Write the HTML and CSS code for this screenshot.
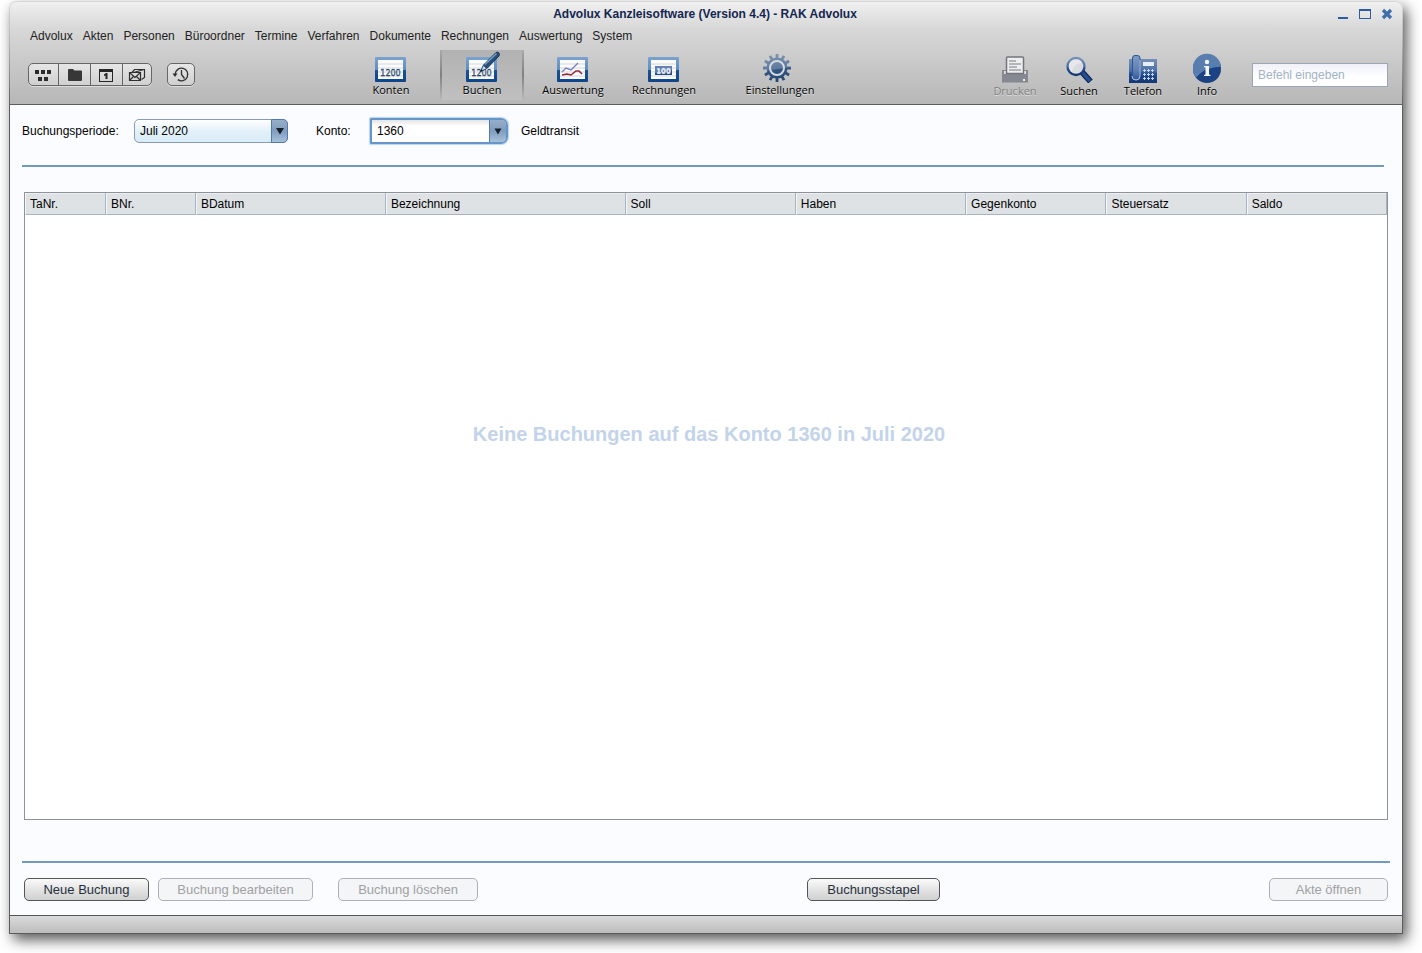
FILE: index.html
```html
<!DOCTYPE html>
<html lang="de">
<head>
<meta charset="utf-8">
<title>Advolux Kanzleisoftware</title>
<link rel="stylesheet" href="styles.css">
</head>
<body>
<svg class="defs" width="0" height="0" aria-hidden="true">
  <defs>
    <linearGradient id="frame" x1="0" y1="0" x2="0" y2="1">
      <stop offset="0" stop-color="#7ba3cf"/><stop offset=".5" stop-color="#5c8dc3"/><stop offset=".51" stop-color="#1c5394"/><stop offset="1" stop-color="#0d4588"/>
    </linearGradient>
    <linearGradient id="gloss" x1="0" y1="0" x2="0" y2="1">
      <stop offset="0" stop-color="#7590b8"/><stop offset=".5" stop-color="#4a6fa8"/><stop offset=".62" stop-color="#224c8e"/><stop offset="1" stop-color="#123672"/>
    </linearGradient>
    <linearGradient id="steel" gradientUnits="userSpaceOnUse" x1="-2" y1="-14" x2="2" y2="14">
      <stop offset="0" stop-color="#7f93ad"/><stop offset=".52" stop-color="#5f7a9e"/><stop offset=".56" stop-color="#34557f"/><stop offset="1" stop-color="#24466f"/>
    </linearGradient>
    <linearGradient id="handset" x1="0" y1="0" x2="0" y2="1">
      <stop offset="0" stop-color="#7f9ac4"/><stop offset=".6" stop-color="#5f80b4"/><stop offset="1" stop-color="#2f5699"/>
    </linearGradient>
    <g id="card">
      <rect x="0" y="6" width="31" height="25" rx="1" fill="url(#frame)"/>
      <rect x="3" y="9" width="25" height="19" fill="#fcfcfd"/>
      <path d="M3 12h25v2H3zM3 16h25v2H3zM3 20h25v2H3zM3 24h25v2H3z" fill="#e6e9ee"/>
    </g>
  </defs>
</svg>

<div class="window">
  <header class="header">
    <div class="titlebar">
      <h1 class="title">Advolux Kanzleisoftware (Version 4.4) - RAK Advolux</h1>
      <div class="controls">
        <button type="button" aria-label="Minimieren"><svg width="12" height="12"><path d="M1 9h10v2H1z" fill="#2c5da3"/></svg></button>
        <button type="button" aria-label="Maximieren"><svg width="12" height="12"><path d="M0 1h12v10H0zM1 3v7h10V3z" fill="#2c5da3" fill-rule="evenodd"/></svg></button>
        <button type="button" aria-label="Schließen"><svg width="12" height="12"><path d="M2 2l8 8M10 2l-8 8" stroke="#3f6eae" stroke-width="3.200"/></svg></button>
      </div>
    </div>

    <nav class="menu" aria-label="Hauptmenü">
      <a href="#">Advolux</a><a href="#">Akten</a><a href="#">Personen</a><a href="#">Büroordner</a><a href="#">Termine</a><a href="#">Verfahren</a><a href="#">Dokumente</a><a href="#">Rechnungen</a><a href="#">Auswertung</a><a href="#">System</a>
    </nav>

    <div class="toolbar">
      <div class="quick">
        <div class="segments">
          <button type="button" aria-label="Übersicht"><svg width="18" height="14"><path d="M0 2h4v4H0zM6 2h4v4H6zM12 2h4v4h-4zM3 9h4v4H3zM9 9h4v4H9z" fill="#2b2b2b"/></svg></button>
          <button type="button" aria-label="Akten"><svg width="16" height="14"><path d="M1 2q0-1 1-1h4l1.500 1.500H14q1 0 1 1V12q0 1-1 1H2q-1 0-1-1z" fill="#373737"/></svg></button>
          <button type="button" aria-label="Kalender"><svg width="16" height="14"><path d="M0 1h14v13H0zM1 4v9h12V4z" fill="#262626" fill-rule="evenodd"/><path d="M5 6.500L7 5h1.500v6H6.500V7.500L5 8z" fill="#262626"/></svg></button>
          <button type="button" aria-label="Nachrichten"><svg width="18" height="14" fill="none" stroke="#303030" stroke-width="1.200"><path d="M4 4.500L6.500 1.500h10v8l-3 2"/><path d="M5.500 4.500L16 1.500"/><path d="M1.500 4.500h11v8h-11zM1.500 4.500l5.500 5 5.500-5M1.500 12.500l4-4M12.500 12.500l-4-4"/></svg></button>
        </div>
        <button class="history" type="button" aria-label="Verlauf"><svg width="18" height="18" fill="none" stroke="#303030" stroke-width="1.300"><path d="M3.200 8a6.300 6.300 0 1 1 2.600 5.600"/><path d="M9.500 4v4.500l3 4"/><path d="M.5 7.500h5L3 11z" fill="#303030" stroke="none"/></svg></button>
      </div>

      <nav class="modules" aria-label="Buchhaltung">
        <button class="tool" type="button">
          <svg width="36" height="32" viewBox="-2 -1 36 32"><use href="#card"/><text x="15.500" y="25" text-anchor="middle" class="digits">1200</text></svg>
          <span>Konten</span>
        </button>
        <button class="tool tool-active" type="button" aria-current="page">
          <svg width="36" height="32" viewBox="-2 -1 36 32"><use href="#card"/><text x="15.500" y="25" text-anchor="middle" class="digits">1200</text><path d="M14.500 20.500l3-6.500L30 1.500q2-1 3 .5t0 3L21 17.500z" fill="#24507d" stroke="#10233d" stroke-width=".8"/><path d="M14.500 20.500l3-6 3 3z" fill="#c5dcf2" stroke="#31587f" stroke-width=".8"/><path d="M14 21l1.500-3 1.500 1.500z" fill="#14283f"/><path d="M19 13.500L30.500 2.500" stroke="#7fa3c4" stroke-width="1.200"/></svg>
          <span>Buchen</span>
        </button>
        <button class="tool" type="button">
          <svg width="36" height="32" viewBox="-2 -1 36 32" fill="none"><use href="#card"/><path d="M5 21l4-4 5 2 7-7" stroke="#7c7fbb" stroke-width="1.400"/><path d="M5 24l5-1 4 1 5-4 3 0 3 3" stroke="#9e2433" stroke-width="1.600"/></svg>
          <span>Auswertung</span>
        </button>
        <button class="tool" type="button">
          <svg width="36" height="32" viewBox="-2 -1 36 32"><use href="#card"/><path d="M7 15h17v9H7z" fill="#24498d"/><path d="M7 15h17v4L7 22z" fill="#647fb2"/><text x="15.500" y="22" text-anchor="middle" class="bill">100</text></svg>
          <span>Rechnungen</span>
        </button>
        <button class="tool tool-settings" type="button">
          <svg width="36" height="32" viewBox="-15 -18 36 32"><circle r="10.500" fill="url(#steel)"/><path d="M0-14v5M7-12.100l-2.500 4.300M-7-12.100l2.500 4.300M12.100-7l-4.300 2.500M-12.100-7l4.300 2.500M-14-.01L-9 .01M9-.01L14 .01M12.100 7l-4.300-2.500M-12.100 7l4.300-2.500M7 12.100l-2.500-4.300M-7 12.100l2.500-4.300M0 14V9" fill="none" stroke="url(#steel)" stroke-width="2.800"/><circle r="7" fill="url(#steel)" stroke="#d3dae4" stroke-width="2"/></svg>
          <span>Einstellungen</span>
        </button>
      </nav>

      <div class="utilities">
        <button class="tool" type="button" disabled>
          <svg width="30" height="32" viewBox="-1 0 30 32"><path d="M1 19h26v12.500H1z" fill="#858991"/><path d="M3 20h22v3H3z" fill="#e4e4e4"/><path d="M5.500 7q0-1 1-1h15q1 0 1 1v15.500h-17z" fill="#eee" stroke="#73767c" stroke-width="1.500"/><path d="M8 10h7M8 13h12M8 16h8M8 19h12" stroke="#777a80" stroke-width="1.200"/><path d="M22 28h2v2h-2z" fill="#eee"/></svg>
          <span>Drucken</span>
        </button>
        <button class="tool" type="button">
          <svg width="30" height="32" viewBox="0 -1 30 32"><path d="M18 20l8.500 9.500" stroke="#0c2550" stroke-width="6"/><path d="M18 20l8 9" stroke="#254f91" stroke-width="3.500"/><circle cx="12" cy="14.500" r="8.500" fill="#dfe2e6" fill-opacity=".75" stroke="url(#gloss)" stroke-width="2.400"/><path d="M5 14q0-7 7-7 5 0 6.500 4Q10 11 8 20q-3-2-3-6z" fill="#fff" fill-opacity=".35"/></svg>
          <span>Suchen</span>
        </button>
        <button class="tool" type="button">
          <svg width="30" height="32" viewBox="0 0 30 32"><path d="M1 8h28v24H1z" fill="url(#gloss)"/><path d="M4.500 7q0-2.500 2.500-2.500h2.500q2.500 0 2.500 2.500v18q0 4-3.800 4t-3.700-4z" fill="url(#handset)" stroke="#2d5494"/><path d="M4 25q0 4 4 4t4-4V9" fill="none" stroke="#b4c4df"/><path d="M15 11h11v4H15z" fill="#e7edf6"/><path d="M15 19.500h11M15 23.500h11M15 27.500h11M16.500 18v11.500M20.500 18v11.500M24.500 18v11.500" stroke="#c5d2e7" stroke-width="1" stroke-dasharray="3 1"/></svg>
          <span>Telefon</span>
        </button>
        <button class="tool" type="button">
          <svg width="30" height="32" viewBox="0 0 30 32"><circle cx="15" cy="18" r="14" fill="#1b4283"/><path d="M1 18a14 14 0 0 1 28-2.500Q13 16 4 26.500 1 23 1 18z" fill="#587eb0"/><circle cx="15" cy="11" r="2.200" fill="#f4f6f9"/><path d="M12 15h5v8.500l1.500.5v1h-6.500v-1l1.500-.5v-7l-1.500-.5z" fill="#f4f6f9"/></svg>
          <span>Info</span>
        </button>
        <input class="command" type="text" placeholder="Befehl eingeben" aria-label="Befehl eingeben">
      </div>
    </div>
  </header>

  <main class="content">
    <form class="filters">
      <label class="period-label" for="period">Buchungsperiode:</label>
      <div class="period">
        <select id="period"><option>Juli 2020</option></select>
        <svg class="arrow" width="16" height="22" aria-hidden="true"><path d="M4 8h8l-4 6.500z" fill="#16202c"/></svg>
      </div>
      <label class="account-label" for="account">Konto:</label>
      <div class="account">
        <input id="account" type="text" value="1360">
        <button type="button" aria-label="Konto wählen"><svg width="16" height="22"><path d="M4.500 8.500h7L8 14.500z" fill="#16202c"/></svg></button>
      </div>
      <output for="account">Geldtransit</output>
    </form>

    <section class="ledger">
      <table>
        <colgroup><col class="c-ta"><col class="c-b"><col class="c-date"><col class="c-name"><col class="c-sum"><col class="c-sum"><col class="c-tax"><col class="c-tax"><col></colgroup>
        <thead><tr><th>TaNr.</th><th>BNr.</th><th>BDatum</th><th>Bezeichnung</th><th>Soll</th><th>Haben</th><th>Gegenkonto</th><th>Steuersatz</th><th>Saldo</th></tr></thead>
      </table>
      <p class="empty">Keine Buchungen auf das Konto 1360 in Juli 2020</p>
    </section>

    <div class="actions">
      <div class="edit">
        <button class="btn btn-new" type="button">Neue Buchung</button>
        <button class="btn btn-edit" type="button" disabled>Buchung bearbeiten</button>
        <button class="btn btn-delete" type="button" disabled>Buchung löschen</button>
      </div>
      <button class="btn btn-stack" type="button">Buchungsstapel</button>
      <button class="btn btn-open" type="button" disabled>Akte öffnen</button>
    </div>
  </main>
  <footer class="status"></footer>
</div>
</body>
</html>
```
FILE: styles.css
```css
* { box-sizing: border-box; }

body {
  margin: 0;
  min-height: 100vh;
  padding: 1px 19px 19px 9px;
  display: flex;
  background: #fff;
  color: #000;
  font: 12px/16px "Liberation Sans", Arial, sans-serif;
}

button, input, select { font: inherit; color: inherit; margin: 0; }
button { padding: 0; border: 0; background: none; }
svg { display: block; flex: none; }
.defs { position: absolute; }

.window {
  flex: 1;
  min-width: 0;
  display: flex;
  flex-direction: column;
  padding: 1px;
  border-radius: 7px 7px 0 0;
  background: linear-gradient(#d8d8d8 0, #b5b5b5 40px, #5c5c5c 110px);
  box-shadow: 4px 6px 14px rgba(0, 0, 0, .65);
}

/* Header */
.header {
  border-bottom: 1px solid #5c5c5c;
  border-radius: 6px 6px 0 0;
  background: linear-gradient(#f0f0f0 0, #d8d8d8 26px, #b7b7b7 100%);
}
.titlebar { display: flex; height: 24px; align-items: center; padding: 0 9px 0 63px; }
.title { flex: 1; margin: 0; text-align: center; font-size: 12px; color: #14264f; }
.controls { display: flex; gap: 10px; }

.menu { display: flex; gap: 10px; padding: 2px 20px 6px; }
.menu a { color: #222; text-decoration: none; }

.toolbar { display: flex; height: 54px; padding: 0 14px 0 18px; }
.quick { display: flex; gap: 15px; width: 321px; padding-top: 13px; }
.segments, .history {
  display: flex;
  height: 23px;
  border: 1px solid #666;
  border-radius: 5px;
  background: linear-gradient(#e6e6e6, #d0d0d0);
  box-shadow: 0 1px #ddd;
}
.segments button { width: 32px; display: grid; place-items: center; border-right: 1px solid #666; }
.segments button:first-child { width: 30px; }
.segments button:last-child { width: 28px; border: 0; }
.history { width: 28px; align-items: center; justify-content: center; }

.modules { display: flex; gap: 7px; }
.utilities { display: flex; margin-left: auto; }
.tool {
  width: 84px;
  height: 50px;
  display: flex;
  flex-direction: column;
  align-items: center;
  font: 11px/15px "Open Sans", "Noto Sans", sans-serif;
  text-shadow: 0 1px #ddd;
}
.tool-active {
  border: 2px solid;
  border-width: 0 2px;
  border-image: linear-gradient(#aaa, #808080 50%, #bbb) 1;
  background: linear-gradient(#b2b2b2, #c0c0c0);
}
.tool-settings { margin-left: 25px; }
.utilities .tool { width: 64px; padding-top: 1px; }
.tool:disabled { color: #818181; }
.digits { font: 8px "DejaVu Sans", sans-serif; fill: #1d3f68; stroke: #1d3f68; stroke-width: .3px; }
.bill { font: bold 7px "DejaVu Sans", sans-serif; fill: #dce5f5; }
.command {
  width: 136px;
  height: 24px;
  margin: 13px 0 0 13px;
  padding: 0 5px;
  border: 1px solid #98a6b5;
  background: linear-gradient(#eef1f8, #fff 60%);
}
.command::placeholder { color: #a3b3c4; opacity: 1; }

/* Content */
.content { flex: 1; display: flex; flex-direction: column; background: #fbfcff; }
.filters {
  display: flex;
  align-items: center;
  height: 62px;
  margin: 0 18px 0 12px;
  padding-bottom: 8px;
  border-bottom: 2px solid #7499b9;
}
.period-label { width: 112px; }
.period { position: relative; width: 154px; }
.period select {
  appearance: none;
  display: block;
  width: 100%;
  height: 24px;
  padding: 0 22px 0 5px;
  border: 1px solid #8b9bb5;
  border-radius: 5px;
  background: linear-gradient(#fff, #e3f1f9 50%, #d8ecf6);
}
.arrow {
  position: absolute;
  top: 0;
  right: 0;
  width: 17px;
  height: 24px;
  border: 1px solid #5279b0;
  border-radius: 0 5px 5px 0;
  background: linear-gradient(#97aec9, #7f9cbe 50%, #a7c2da);
  pointer-events: none;
}
.account-label { width: 54px; margin-left: 28px; }
.account {
  display: flex;
  width: 138px;
  height: 26px;
  margin-right: 13px;
  border: 2px solid #6695ca;
  border-radius: 1px 7px 7px 1px;
  box-shadow: 0 0 1px 1px #b9d5ef;
}
.account input {
  flex: 1;
  min-width: 0;
  padding: 0 5px;
  border: 0;
  outline: 0;
  background: linear-gradient(#e4e4e4, #fff 6px);
}
.account button {
  width: 17px;
  border-left: 1px solid #5279b0;
  border-radius: 0 4px 4px 0;
  background: linear-gradient(#97aec9, #7f9cbe 50%, #a7c2da);
}

.ledger { flex: 1; margin: 25px 14px 41px; border: 1px solid #8d929b; background: #fff; }
table { width: 100%; table-layout: fixed; border-collapse: separate; border-spacing: 0; }
th {
  height: 22px;
  padding: 0 4px;
  border-left: 1px solid #f5f6f7;
  border-right: 1px solid #a5b4c2;
  border-bottom: 1px solid #a5b4c2;
  background: #dfe2e5;
  box-shadow: inset 0 1px #eceef0;
  font-weight: normal;
  text-align: left;
}
.c-ta { width: 5.95%; }
.c-b { width: 6.6%; }
.c-date { width: 13.95%; }
.c-name { width: 17.6%; }
.c-sum { width: 12.5%; }
.c-tax { width: 10.3%; }
.empty {
  margin: 0;
  padding: 206px 0 20px 6px;
  color: #c3d4ea;
  font: bold 20px/26px "Liberation Sans", Arial, sans-serif;
  text-align: center;
}

.actions {
  display: flex;
  justify-content: space-between;
  margin: 0 12px;
  padding: 15px 2px 14px;
  border-top: 2px solid #7499b9;
}
.edit { display: flex; }
.btn {
  height: 23px;
  border: 1px solid #555;
  border-radius: 5px;
  background: linear-gradient(#fafafa, #e6e6e6 45%, #d0d0d0);
  color: #26303d;
  font-size: 13px;
}
.btn:disabled { border-color: #aeb0b3; background: #f4f5f6; color: #a0a1a4; }
.btn-new { width: 125px; }
.btn-edit { width: 155px; margin: 0 25px 0 9px; }
.btn-delete { width: 140px; }
.btn-stack { width: 133px; }
.btn-open { width: 119px; }

.status { height: 18px; border-top: 1px solid #555; background: linear-gradient(#dadada, #bdbdbd); }
```
